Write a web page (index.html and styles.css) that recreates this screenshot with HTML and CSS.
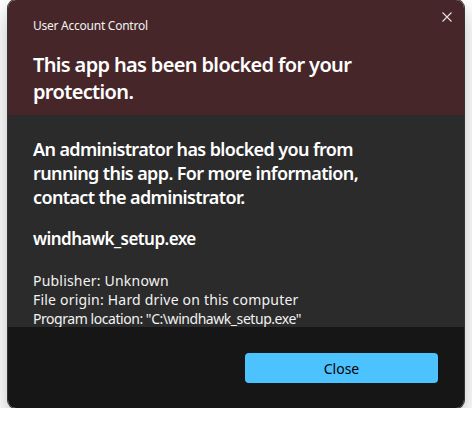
FILE: index.html
```html
<!DOCTYPE html>
<html>
<head>
<meta charset="utf-8">
<link rel="stylesheet" href="styles.css">
</head>
<body>
<div class="dialog">
  <div class="header">
    <div class="caption">User Account Control</div>
    <button class="close-x" aria-label="Close">
      <svg width="10" height="10" viewBox="0 0 10 10"><path d="M0.5 0.5 L9.5 9.5 M9.5 0.5 L0.5 9.5" stroke="#e8e0e0" stroke-width="1.1" fill="none"/></svg>
    </button>
    <h1 class="title">This app has been blocked for your protection.</h1>
  </div>
  <div class="content">
    <p class="message">An administrator has blocked you from running this app. For more information, contact the administrator.</p>
    <p class="filename">windhawk_setup.exe</p>
    <div class="details">
      <div>Publisher: Unknown</div>
      <div>File origin: Hard drive on this computer</div>
      <div class="path-line">Program location: "C:\windhawk_setup.exe"</div>
    </div>
  </div>
  <div class="footer">
    <button class="btn-close">Close</button>
  </div>
</div>
</body>
</html>
```

FILE: styles.css
```css
html, body {
  margin: 0;
  padding: 0;
  background: #ffffff;
}
body {
  font-family: "Segoe UI", "Noto Sans", "Open Sans", sans-serif;
  color: #ffffff;
}
.dialog {
  margin-left: 8px;
  width: 456px;
  height: 408px;
  border-radius: 8px;
  overflow: hidden;
  display: flex;
  flex-direction: column;
  box-shadow: 0 10px 22px rgba(0, 0, 0, 0.28), 0 0 0 1px #3a3a3a;
}
.header {
  position: relative;
  height: 115px;
  box-sizing: border-box;
  background: #462628;
  padding: 18px 25px 0 25px;
}
.caption {
  font-size: 12px;
  line-height: 16px;
  letter-spacing: -0.25px;
  color: #f2f2f2;
}
.close-x {
  position: absolute;
  top: 12px;
  right: 12px;
  width: 10px;
  height: 10px;
  padding: 0;
  border: 0;
  background: transparent;
  display: flex;
}
.title {
  margin: 17px 0 0 0;
  max-width: 345px;
  font-size: 20px;
  font-weight: 600;
  line-height: 27px;
  letter-spacing: -0.65px;
  color: #ffffff;
}
.content {
  height: 212px;
  box-sizing: border-box;
  background: #2b2b2b;
  padding: 22px 25px 0 25px;
}
.message {
  margin: 0;
  max-width: 345px;
  font-size: 18px;
  font-weight: 600;
  line-height: 24px;
  letter-spacing: -0.62px;
}
.filename {
  margin: 18px 0 0 0;
  font-size: 17px;
  font-weight: 600;
  line-height: 24px;
  letter-spacing: -0.55px;
}
.details {
  margin-top: 20px;
  font-size: 14px;
  line-height: 19px;
  letter-spacing: 0.2px;
  color: #f2f2f2;
}
.details .path-line {
  letter-spacing: -0.45px;
}
.footer {
  flex: 1;
  background: #161616;
  display: flex;
  justify-content: flex-end;
  align-items: flex-start;
  padding: 26px 26px 0 0;
}
.btn-close {
  width: 193px;
  height: 30px;
  border: 0;
  border-radius: 4px;
  background: #4cc2ff;
  color: #000000;
  font-family: inherit;
  font-size: 14px;
}
```
